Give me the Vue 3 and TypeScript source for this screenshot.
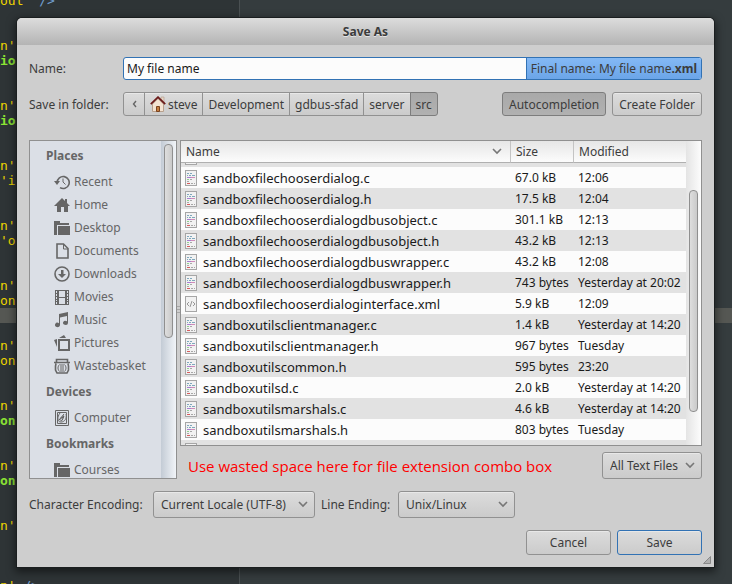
<script setup lang="ts">
import { onMounted, ref } from 'vue'

interface Glyph { fill?: string; line?: string; thin?: string }
interface Place { label: string; glyph: Glyph }
interface Section { title: string; places: Place[] }
interface FileRow { name: string; size: string; modified: string; kind: 'code' | 'xml' }
interface CodeLine { text: string; tone: string; tail?: string }

const folder: Glyph = { fill: 'M0 1h6v2h9v2H3v10H0zM4 6h12v9H4z' }

const sections: Section[] = [
  {
    title: 'Places',
    places: [
      { label: 'Recent', glyph: { line: 'M3.2 8.5A6 6 0 1 1 6 13.6', thin: 'M9 4.5V8l2.5 2.5', fill: 'M0 7h6L3 11z' } },
      { label: 'Home', glyph: { fill: 'M0 9L8 1l3 3V2h2v4l3 3h-2v6h-4v-5H7v5H3V9z' } },
      { label: 'Desktop', glyph: folder },
      { label: 'Documents', glyph: { line: 'M3 1h6.5L14 5.500V15H3z', thin: 'M9.500 1v5H14' } },
      { label: 'Downloads', glyph: { line: 'M8 1a7 7 0 1 1 0 14A7 7 0 0 1 8 1z', fill: 'M7 4h2.500v4H12l-4 4-4-4h3z' } },
      { label: 'Movies', glyph: { fill: 'M1 1h14v15H1zM5 2v6h6V2zM5 9v6h6V9zM2 2v2h1V2zM2 5v2h1V5zM2 8v2h1V8zM2 11v1h1v-1zM2 13v2h1v-2zM13 2v2h1V2zM13 5v2h1V5zM13 8v2h1V8zM13 11v1h1v-1zM13 13v2h1v-2z' } },
      { label: 'Music', glyph: { fill: 'M5 2l9-2v11a2.500 2 0 1 1-1-1.700V4L6 5.500V13a2.500 2.200 0 1 1-1-1.800z' } },
      { label: 'Pictures', glyph: { fill: 'M4 4h12v12H4zM6 6v8h8V6zM5 3l5-3 2 3zM0 5l3-1v8z' } },
      { label: 'Wastebasket', glyph: { line: 'M2.500 4V1.500h11V4M0 4.500h16M2 5.500L1.500 8v4l1.500 3h10l1.500-3V8L14 5.500', thin: 'M5.500 6.500c-2 2-2 5 0 7M10.500 6.500c2 2 2 5 0 7M7 6v8M9 6v8' } },
    ],
  },
  {
    title: 'Devices',
    places: [
      { label: 'Computer', glyph: { thin: 'M1.500 .5h13v15h-13zM3.500 2.500h9v11h-9zM6 3C3 7 3 12 7 12s6-4 5-8M5 10l5-6M6 8.500l4-2-2 4-3-1', fill: 'M7 8l3-3v2l-2 2z' } },
    ],
  },
  { title: 'Bookmarks', places: [{ label: 'Courses', glyph: folder }] },
]

const files: FileRow[] = [
  { name: '', size: '', modified: '', kind: 'code' },
  { name: 'sandboxfilechooserdialog.c', size: '67.0 kB', modified: '12:06', kind: 'code' },
  { name: 'sandboxfilechooserdialog.h', size: '17.5 kB', modified: '12:04', kind: 'code' },
  { name: 'sandboxfilechooserdialogdbusobject.c', size: '301.1 kB', modified: '12:13', kind: 'code' },
  { name: 'sandboxfilechooserdialogdbusobject.h', size: '43.2 kB', modified: '12:13', kind: 'code' },
  { name: 'sandboxfilechooserdialogdbuswrapper.c', size: '43.2 kB', modified: '12:08', kind: 'code' },
  { name: 'sandboxfilechooserdialogdbuswrapper.h', size: '743 bytes', modified: 'Yesterday at 20:02', kind: 'code' },
  { name: 'sandboxfilechooserdialoginterface.xml', size: '5.9 kB', modified: '12:09', kind: 'xml' },
  { name: 'sandboxutilsclientmanager.c', size: '1.4 kB', modified: 'Yesterday at 14:20', kind: 'code' },
  { name: 'sandboxutilsclientmanager.h', size: '967 bytes', modified: 'Tuesday', kind: 'code' },
  { name: 'sandboxutilscommon.h', size: '595 bytes', modified: '23:20', kind: 'code' },
  { name: 'sandboxutilsd.c', size: '2.0 kB', modified: 'Yesterday at 14:20', kind: 'code' },
  { name: 'sandboxutilsmarshals.c', size: '4.6 kB', modified: 'Yesterday at 14:20', kind: 'code' },
  { name: 'sandboxutilsmarshals.h', size: '803 bytes', modified: 'Tuesday', kind: 'code' },
  { name: '', size: '', modified: '', kind: 'code' },
]

const crumbs = ['Development', 'gdbus-sfad', 'server', 'src']

const blank: CodeLine = { text: '', tone: 'str' }
const attr: CodeLine = { text: "n'", tone: 'str' }
const block = (text: string, tone: string): CodeLine[] => [attr, { text, tone }, blank, blank]
const codeLines: CodeLine[] = [
  { text: "out'", tone: 'str', tail: ' />' },
  blank,
  blank,
  ...block('ion', 'key'),
  ...block('ion', 'key'),
  ...block("'in", 'str'),
  ...block("'ou", 'str'),
  attr,
  { text: 'on', tone: 'str' },
  { text: '', tone: 'current' },
  blank,
  ...block('on', 'str'),
  ...block('ons', 'key'),
  ...block('ons', 'key'),
  attr,
  blank,
  blank,
  blank,
  { text: "n'", tone: 'str', tail: ' />' },
]

const fileName = ref('My file name')
const encoding = ref('Current Locale (UTF-8)')
const lineEnding = ref('Unix/Linux')
const filter = ref('All Text Files')
const autocomplete = ref(true)
const scroller = ref<HTMLElement | null>(null)

onMounted(() => {
  if (scroller.value) scroller.value.scrollTop = 17
})
</script>

<template>
  <main class="desktop">
    <div class="editor" aria-hidden="true">
      <div v-for="(line, i) in codeLines" :key="i" class="code" :class="line.tone">{{ line.text }}<span v-if="line.tail" class="tail">{{ line.tail }}</span></div>
    </div>

    <form class="dialog" @submit.prevent>
      <h1 class="title">Save As</h1>
      <div class="body">
        <div class="row name-row">
          <label class="lead" for="file-name">Name:</label>
          <div class="entry">
            <input id="file-name" v-model="fileName" type="text" />
            <output class="final" for="file-name">Final name: {{ fileName }}<b>.xml</b></output>
          </div>
        </div>

        <div class="row path-row">
          <span class="lead">Save in folder:</span>
          <nav class="path">
            <button type="button" class="back" aria-label="Back">
              <svg width="5" height="8" viewBox="0 0 5 8"><path d="M4 1L1.500 4 4 7" fill="none" stroke="#666" stroke-width="1.400" /></svg>
            </button>
            <button type="button" class="home">
              <svg width="16" height="16" viewBox="0 0 16 16">
                <path d="M11 1h3v6h-3z" fill="#e6d5c5" stroke="#b39b8c" stroke-width=".6" />
                <path d="M2.500 8L8 2.500 13.500 8v7.500h-11z" fill="#f3e3d2" stroke="#b8a08c" />
                <path d="M.8 8.200L8 1.200l7.200 7" fill="none" stroke="#6b1a1a" stroke-width="1.800" />
                <path d="M6.500 10.500h3v5h-3z" fill="#c67c3e" stroke="#7a4420" />
              </svg>
              steve
            </button>
            <button v-for="c in crumbs" :key="c" type="button" :class="{ pressed: c === 'src' }">{{ c }}</button>
          </nav>
          <span class="spacer"></span>
          <button type="button" class="btn" :class="{ pressed: autocomplete }" :aria-pressed="autocomplete" @click="autocomplete = !autocomplete">Autocompletion</button>
          <button type="button" class="btn">Create Folder</button>
        </div>

        <div class="panes">
          <aside class="sidebar">
            <div class="places">
              <section v-for="s in sections" :key="s.title">
                <h2>{{ s.title }}</h2>
                <a v-for="p in s.places" :key="p.label" href="#">
                  <svg width="16" height="16" viewBox="0 0 16 16">
                    <path v-if="p.glyph.fill" :d="p.glyph.fill" fill="#666" fill-rule="evenodd" />
                    <path v-if="p.glyph.line" :d="p.glyph.line" fill="none" stroke="#666" stroke-width="1.600" />
                    <path v-if="p.glyph.thin" :d="p.glyph.thin" fill="none" stroke="#666" stroke-width="1" />
                  </svg>
                  {{ p.label }}
                </a>
              </section>
            </div>
            <div class="trough side-trough"><div class="thumb"></div></div>
          </aside>

          <div class="gripper"><i></i><i></i><i></i></div>

          <div class="content">
            <div class="list">
              <div ref="scroller" class="scroller">
                <table>
                  <colgroup><col /><col class="c-size" /><col class="c-mod" /></colgroup>
                  <thead>
                    <tr>
                      <th><div class="sort">Name
                        <svg width="10" height="7" viewBox="0 0 10 7"><path d="M1 1l4 4 4-4" fill="none" stroke="#777" stroke-width="1.600" /></svg></div>
                      </th>
                      <th>Size</th>
                      <th>Modified</th>
                    </tr>
                  </thead>
                  <tbody>
                    <tr v-for="(f, i) in files" :key="i">
                      <td>
                        <div class="file">
                          <svg width="12" height="16" viewBox="0 0 12 16" shape-rendering="crispEdges">
                            <path d="M.5.5h11v15H.5z" fill="#f2f2f2" stroke="#a6a6a6" />
                            <template v-if="f.kind === 'code'">
                              <path d="M2 3.500h2M5 3.500h2M2 5.500h1M4 5.500h2M7 5.500h3" stroke="#7fa8bd" />
                              <path d="M2 7.500h4" stroke="#a77fd0" />
                              <path d="M6 7.500h4" stroke="#cf8cb8" />
                              <path d="M2 9.500h2" stroke="#8fd08f" />
                              <path d="M5 9.500h2M2 11.500h2M6 13.500h2M9 13.500h1" stroke="#a8a8a8" />
                              <path d="M2 13.500h3" stroke="#d85c5c" />
                            </template>
                            <path v-else d="M4 6L2 8l2 2M8 6l2 2-2 2M7 5l-2 6" fill="none" stroke="#999" shape-rendering="auto" />
                          </svg>
                          {{ f.name }}
                        </div>
                      </td>
                      <td>{{ f.size }}</td>
                      <td>{{ f.modified }}</td>
                    </tr>
                  </tbody>
                </table>
              </div>
              <div class="trough list-trough"><div class="thumb"></div></div>
            </div>
            <div class="row filter-row">
              <p class="note">Use wasted space here for file extension combo box</p>
              <div class="combo w-filter">
                <select v-model="filter" aria-label="File type"><option>All Text Files</option></select>
                <svg width="10" height="7" viewBox="0 0 10 7"><path d="M1 1l4 4 4-4" fill="none" stroke="#777" stroke-width="1.600" /></svg>
              </div>
            </div>
          </div>
        </div>

        <div class="row options">
          <label class="l-encoding" for="encoding">Character Encoding:</label>
          <div class="combo w-encoding">
            <select id="encoding" v-model="encoding"><option>Current Locale (UTF-8)</option></select>
            <svg width="10" height="7" viewBox="0 0 10 7"><path d="M1 1l4 4 4-4" fill="none" stroke="#777" stroke-width="1.600" /></svg>
          </div>
          <label class="l-ending" for="ending">Line Ending:</label>
          <div class="combo w-ending">
            <select id="ending" v-model="lineEnding"><option>Unix/Linux</option></select>
            <svg width="10" height="7" viewBox="0 0 10 7"><path d="M1 1l4 4 4-4" fill="none" stroke="#777" stroke-width="1.600" /></svg>
          </div>
        </div>

        <div class="row actions">
          <button type="button" class="btn wide">Cancel</button>
          <button type="submit" class="btn wide default">Save</button>
        </div>
      </div>
      <svg class="grip" width="8" height="8" viewBox="0 0 8 8"><path d="M7.500 .5v7h-7z" fill="#b0b0b0" stroke="#8a8a8a" /></svg>
    </form>
  </main>
</template>

<style>
body { margin: 0; }
</style>

<style scoped>
* { box-sizing: border-box; }
.desktop {
  display: grid;
  grid-template: minmax(0, 1fr) / minmax(0, 1fr);
  height: 100vh;
  overflow: hidden;
  background: linear-gradient(90deg, #2e3436 239px, #4a5052 239px, #4a5052 240px, #353c3e 240px);
  font-family: "Noto Sans", "Open Sans", sans-serif;
  font-size: 12px;
  color: #3c3c3c;
}
.editor {
  grid-area: 1 / 1;
  margin-top: -7px;
  font: 13px/15px "DejaVu Sans Mono", monospace;
  white-space: pre;
}
.code { height: 15px; }
.str { color: #edd400; }
.key { color: #8ae234; font-weight: bold; }
.current { background: #555753; }
.tail { color: #729fcf; }

.dialog {
  grid-area: 1 / 1;
  position: relative;
  display: flex;
  flex-direction: column;
  margin: 18px 18px 17px 17px;
  background: #cecece;
  border-radius: 5px 5px 0 0;
  box-shadow: 0 0 0 1px #1a1e1f, 0 3px 8px 2px rgba(0, 0, 0, 0.5);
}
.title {
  margin: 0;
  height: 27px;
  line-height: 27px;
  text-align: center;
  font-size: 12px;
  font-weight: bold;
  color: #3c3c3c;
  text-shadow: 0 1px 0 #e4e4e4;
  background: linear-gradient(#dcdcdc, #b4b4b4);
  border-radius: 5px 5px 0 0;
}
.body {
  flex: 1;
  min-height: 0;
  display: flex;
  flex-direction: column;
  gap: 12px;
  padding: 12px;
}
.row { display: flex; align-items: center; gap: 6px; }
.lead { width: 88px; white-space: nowrap; }
.spacer { flex: 1; }

.entry {
  flex: 1;
  display: flex;
  height: 23px;
  border: 1px solid #3272b4;
  border-radius: 3px;
  background: #fcfcfc;
  overflow: hidden;
}
.entry input {
  flex: 1;
  min-width: 0;
  padding: 0 3px;
  border: 0;
  outline: 0;
  background: none;
  font: inherit;
  color: #1a1a1a;
}
.final {
  padding: 0 4px;
  line-height: 21px;
  border-left: 1px solid #3272b4;
  background: linear-gradient(#84b9f5, #6ba5e8);
}

button, select {
  font: inherit;
  color: #3c3c3c;
  border: 1px solid #919191;
  border-radius: 3px;
  background: linear-gradient(#dcdcdc, #cbcbcb);
  box-shadow: inset 0 1px 0 #e8e8e8;
}
button { height: 24px; padding: 0 6px; white-space: nowrap; }
.path { display: flex; }
.path button {
  display: flex;
  align-items: center;
  gap: 2px;
  margin-left: -1px;
  padding: 0 5px;
  border-radius: 0;
}
.path button:first-child { margin-left: 0; border-radius: 3px 0 0 3px; }
.path button:last-child { border-radius: 0 3px 3px 0; }
.path .back { width: 22px; justify-content: center; }
button.pressed {
  background: linear-gradient(#a9a9a9, #b1b1b1);
  border-color: #7d7d7d;
  box-shadow: none;
}
.btn.wide { width: 85px; height: 25px; }
.btn.default { border-color: #3272b4; }

.panes { flex: 1; min-height: 0; display: flex; margin-top: 12px; }
.sidebar {
  width: 148px;
  display: flex;
  overflow: hidden;
  border: 1px solid #909090;
  background: #dbdfe6;
  color: #666;
}
.places { flex: 1; overflow: hidden; }
.places h2 { margin: 0; padding-left: 16px; font-size: 12px; line-height: 29px; }
.places a {
  display: flex;
  align-items: center;
  gap: 4px;
  height: 23px;
  padding-left: 24px;
  color: inherit;
  text-decoration: none;
  white-space: nowrap;
}
.trough { width: 15px; padding: 0 3px; }
.side-trough { padding-top: 3px; background: linear-gradient(90deg, #c3cbd5, #f1f4f8); }
.list-trough { padding-top: 49px; background: linear-gradient(90deg, #e4e4e4, #fcfcfc); }
.thumb {
  width: 9px;
  border: 1px solid #8f8f8f;
  border-radius: 4px;
  background: linear-gradient(90deg, #dedede, #cacaca);
}
.side-trough .thumb { height: 58%; }
.list-trough .thumb { height: 87%; }
.gripper {
  width: 3px;
  display: flex;
  flex-direction: column;
  justify-content: center;
  gap: 2px;
}
.gripper i { height: 1px; background: #a8a8a8; }

.content { flex: 1; min-width: 0; display: flex; flex-direction: column; gap: 6px; }
.list {
  flex: 1;
  min-height: 0;
  display: flex;
  border: 1px solid #909090;
  background: #fcfcfc;
}
.scroller { flex: 1; min-width: 0; overflow: hidden; }
table { width: 100%; table-layout: fixed; border-collapse: separate; border-spacing: 0; }
.c-size { width: 63px; }
.c-mod { width: 113px; }
th {
  position: sticky;
  top: 0;
  height: 22px;
  padding: 0 5px;
  text-align: left;
  font-weight: normal;
  border-bottom: 1px solid #b0b0b0;
  background: linear-gradient(#e6e6e6, #fcfcfc);
}
th + th { border-left: 1px solid #c4c4c4; }
.sort { display: flex; align-items: center; justify-content: space-between; padding-right: 3px; }
td { height: 21px; padding: 0 0 0 5px; color: #1a1a1a; white-space: nowrap; }
td:first-child { padding-left: 4px; }
tbody tr:nth-child(odd) { background: #e2e2e2; }
.file { display: flex; align-items: center; gap: 6px; font-size: 13px; line-height: 18px; }
.filter-row { justify-content: space-between; }
.note { margin: 0 0 0 8px; font-family: "Open Sans", "Noto Sans", sans-serif; font-size: 15px; line-height: 20px; color: #f00; white-space: nowrap; }

.combo { display: grid; align-items: center; }
.combo select {
  grid-area: 1 / 1;
  appearance: none;
  width: 100%;
  height: 27px;
  padding: 0 7px;
}
.combo svg { grid-area: 1 / 1; justify-self: end; margin-right: 7px; pointer-events: none; }
.l-encoding { min-width: 118px; }
.l-ending { min-width: 71px; }
.w-filter { width: 100px; }
.w-encoding { width: 162px; }
.w-ending { width: 117px; }
.actions { justify-content: flex-end; }
.grip { position: absolute; right: 3px; bottom: 3px; }
</style>
